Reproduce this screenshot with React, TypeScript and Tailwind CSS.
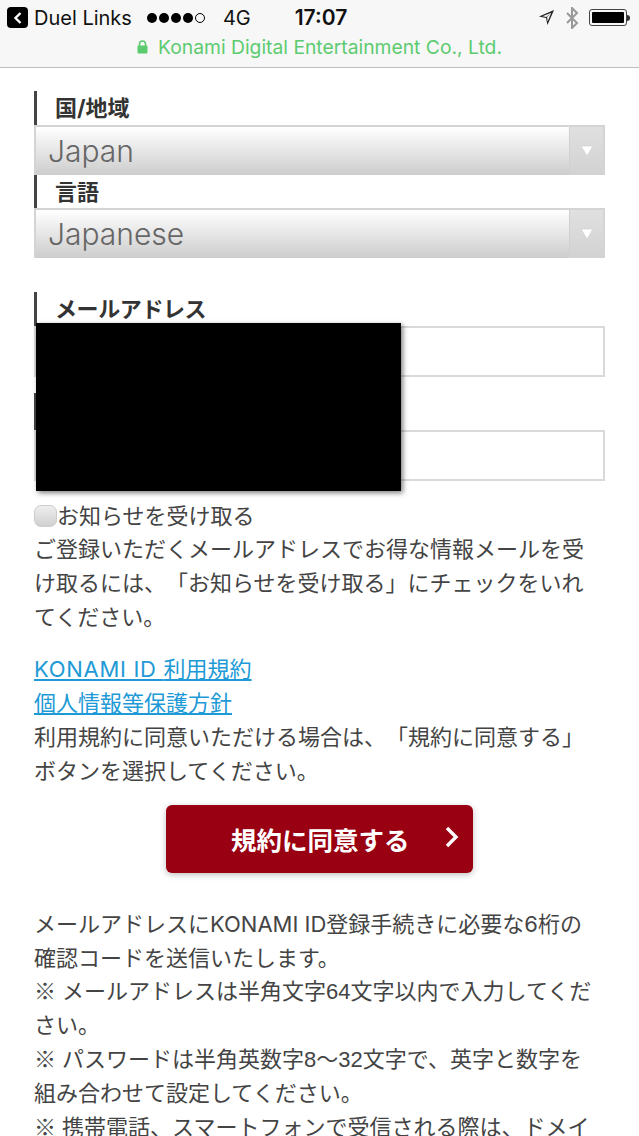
const font = { fontFamily: 'Inter, "Noto Sans CJK JP", sans-serif' };

function Field({ label, h = "h-[34px]", cls = "" }: { label: string; h?: string; cls?: string }) {
  return (
    <div className={`${h} ${cls} border-l-[3px] border-[#444] pl-[18px] flex items-center text-[22px] font-bold text-[#333] leading-none`}>
      {label}
    </div>
  );
}

function Select({ value }: { value: string }) {
  return (
    <div className="h-[50px] border-2 border-[#d4d4d4] border-b-0 bg-gradient-to-b from-white to-[#cdcdcd] flex items-stretch">
      <div className="flex-1 pl-[12px] text-[30px] text-[#666] flex items-center" style={{ fontFamily: 'Inter, "Liberation Sans", sans-serif', fontWeight: 300 }}>
        {value}
      </div>
      <div className="w-[34px] bg-gradient-to-b from-[#e0e0e0] to-[#d2d2d2] border-l border-[#d0d0d0] flex items-center justify-center">
        <svg width="14" height="12" viewBox="0 0 14 12">
          <path d="M1 1h12L7 11z" fill="#fff" stroke="#c4c4c4" strokeWidth="0.5" />
        </svg>
      </div>
    </div>
  );
}

function Input() {
  return <div className="h-[51px] border-2 border-[#d9d9d9] bg-white" />;
}

export default function App() {
  return (
    <div className="relative w-[639px] h-[1136px] overflow-hidden bg-white [text-spacing-trim:space-all]" style={font}>
      <header className="h-[68px] bg-[#f7f7f7] border-b border-[#bdbdbd] relative">
        <div className="h-[35px] flex items-center text-[#111] relative">
          <div className="ml-[7px] w-[21px] h-[21px] bg-black rounded-[4px] flex items-center justify-center">
            <svg width="12" height="14" viewBox="0 0 12 14"><path d="M8.5 2L3.5 7l5 5" fill="none" stroke="#fff" strokeWidth="2.4" /></svg>
          </div>
          <span className="ml-[6px] text-[20px]">Duel Links</span>
          <div className="ml-[15px] flex gap-[2px] items-center">
            {[0, 1, 2, 3].map((i) => <span key={i} className="w-[10px] h-[10px] rounded-full bg-black" />)}
            <span className="w-[10px] h-[10px] rounded-full border border-black" />
          </div>
          <span className="ml-[18px] text-[20px]">4G</span>
          <span className="ml-[44px] text-[21px] font-semibold">17:07</span>
          <div className="ml-auto mr-[9px] flex items-center">
            <svg width="17" height="17" viewBox="0 0 18 18" className="mr-[10px]"><path d="M17 1L1 8l7.5 1.5L10 17z M14 4L8.8 8.6 4.8 7.8L14 4L10.2 13.2 9.6 8.5z" fillRule="evenodd" fill="#222" /></svg>
            <svg width="14" height="22" viewBox="0 0 14 22" className="mr-[10px]"><path d="M2 6l10 10-5 5V1l5 5L2 16" fill="none" stroke="#999" strokeWidth="2" /></svg>
            <div className="w-[38px] h-[17px] border border-[#444] rounded-[3px] p-[2px]"><div className="h-full bg-black rounded-[1px]" /></div>
            <div className="w-[3px] h-[6px] bg-[#333] rounded-r-sm" />
          </div>
        </div>
        <div className="flex items-center justify-center text-[#5ccb70] text-[19.3px] h-[24px]">
          <svg width="11" height="14" viewBox="0 0 11 14" className="mr-[10px]">
            <path d="M2.5 6V4a3 3 0 0 1 6 0v2" fill="none" stroke="#5ccb70" strokeWidth="1.6" />
            <rect x="0.5" y="5.5" width="10" height="8" rx="1" fill="#5ccb70" />
          </svg>
          Konami Digital Entertainment Co., Ltd.
        </div>
      </header>

      <main className="px-[34px] pt-[23px]">
        <Field label="国/地域" />
        <Select value="Japan" />
        <Field label="言語" h="h-[33px]" />
        <Select value="Japanese" />
        <div className="h-[34px]" />
        <Field label="メールアドレス" cls="tracking-[-0.4px]" />
        <Input />
        <div className="h-[16px]" />
        <Field label="パスワード" h="h-[37px]" />
        <Input />

        <div className="mt-[18px] h-[34px] flex items-center text-[22px] text-[#444]">
          <span className="w-[23px] h-[22px] rounded-[7px] border border-[#ccc] bg-gradient-to-b from-[#eeeeee] to-[#d0d0d0] shrink-0" />
          お知らせを受け取る
        </div>
        <div className="-mt-[1px] pr-[6px] text-[22px] leading-[34px] text-[#444]">
          <p>ご登録いただくメールアドレスでお得な情報メールを受け取るには、「お知らせを受け取る」にチェックをいれてください。</p>
          <p className="mt-[18px] text-[#1e9ad6] underline"><span className="tracking-[0.7px]">KONAMI ID </span>利用規約</p>
          <p className="text-[#1e9ad6] underline">個人情報等保護方針</p>
          <p>利用規約に同意いただける場合は、「規約に同意する」ボタンを選択してください。</p>
        </div>
        <div className="mt-[17px] w-[307px] h-[68px] ml-[132px] rounded-[6px] bg-[#990011] shadow-[0_2px_6px_rgba(0,0,0,0.25)] flex items-center text-white text-[25.5px] font-bold">
          <span className="ml-[65px] mt-[4px]">規約に同意する</span>
          <svg width="14" height="24" viewBox="0 0 14 24" className="ml-[35px] -mt-[4px]"><path d="M2 3l9 9-9 9" fill="none" stroke="#fff" strokeWidth="3.4" /></svg>
        </div>
        <div className="mt-[34px] pr-[6px] text-[22px] leading-[34px] text-[#444]">
          <p>メールアドレスにKONAMI ID登録手続きに必要な6桁の確認コードを送信いたします。</p>
          <div className="font-['Liberation_Sans','Noto_Sans_CJK_JP',sans-serif]">
            <p>※ メールアドレスは半角文字64文字以内で入力してください。</p>
            <p>※ パスワードは半角英数字8～32文字で、英字と数字を組み合わせて設定してください。</p>
            <p>※ 携帯電話、スマートフォンで受信される際は、ドメイン指定受信の設定をご確認ください。</p>
          </div>
        </div>
      </main>

      <div className="absolute left-[36px] top-[323px] w-[365px] h-[168px] bg-black shadow-[2px_2px_5px_rgba(0,0,0,0.5)]" />
    </div>
  );
}
